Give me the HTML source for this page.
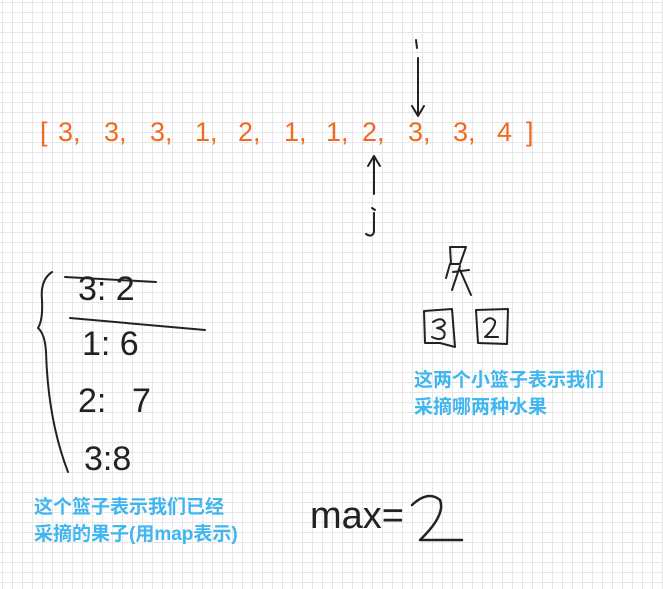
<!DOCTYPE html>
<html><head><meta charset="utf-8"><style>
html,body{margin:0;padding:0}
body{width:663px;height:589px;overflow:hidden;background-color:#fff;
background-image:linear-gradient(#e6e6e6 1px,transparent 1px),linear-gradient(90deg,#e6e6e6 1px,transparent 1px);
background-size:10px 10px;background-position:2px 2px;position:relative;font-family:"Liberation Sans","Noto Sans CJK SC",sans-serif}
.t{position:absolute;color:#3fb6f0;font-weight:bold;font-size:19px;line-height:27px;white-space:nowrap}
svg{position:absolute;left:0;top:0}
</style></head><body>
<svg width="663" height="589" fill="none" stroke-linecap="round" stroke-linejoin="round">
<g font-family="Liberation Sans, sans-serif" font-size="27" fill="#f06a23" stroke="none">
<text x="40" y="141">[</text>
<text x="58" y="141">3,</text><text x="104" y="141">3,</text><text x="150" y="141">3,</text>
<text x="195" y="141">1,</text><text x="238" y="141">2,</text><text x="284" y="141">1,</text>
<text x="326" y="141">1,</text><text x="362" y="141">2,</text><text x="408" y="141">3,</text>
<text x="453" y="141">3,</text><text x="497" y="141">4</text><text x="526" y="141">]</text>
</g>
<g stroke="#222" stroke-width="2">
<path d="M416 40 L417 48 M418 58 L418 114 M412 106 L418 116 L424 106"/>
<path d="M374 156 L374 194 M368 166 L374 156 L380 166 M372 208 L375 210 M374 213 L374 232 Q372 238 366 234"/>
<path d="M52 272 Q40 280 42 300 Q43 320 38 328 Q45 334 46 352 Q48 420 68 472"/>
<path d="M65 277 L156 282 M70 318 L205 330"/>
<path d="M450 247 L466 247 L460 264 L451 264 Z M450 264 L446 278 M453 272 L469 270 M460 266 L452 290 M460 270 L471 295"/>
<path d="M424 311 L452 309 L455 347 L440 343 L425 343 Z"/>
<path d="M476 310 L508 309 L507 344 L478 343 Z"/>
<path d="M433 322 Q442 316 445 323 Q444 327 437 328 Q447 330 444 337 Q440 341 432 337"/>
<path d="M484 322 Q490 315 495 321 Q496 327 485 337 L498 337"/>
</g>
<g font-family="Liberation Sans, sans-serif" font-size="34" fill="#222" stroke="none">
<text x="78" y="300">3: 2</text>
<text x="82" y="355">1: 6</text>
<text x="78" y="412">2:</text><text x="132" y="412">7</text>
<text x="84" y="470">3:8</text>
<text x="310" y="528" font-size="38">max=</text>
</g>
<path d="M412 505 Q428 490 440 500 Q446 515 420 540 L462 540" stroke="#222" stroke-width="2.5"/>
</svg>
<div class="t" style="left:414px;top:367px">这两个小篮子表示我们<br>采摘哪两种水果</div>
<div class="t" style="left:34px;top:494px">这个篮子表示我们已经<br>采摘的果子(用map表示)</div>
</body></html>
